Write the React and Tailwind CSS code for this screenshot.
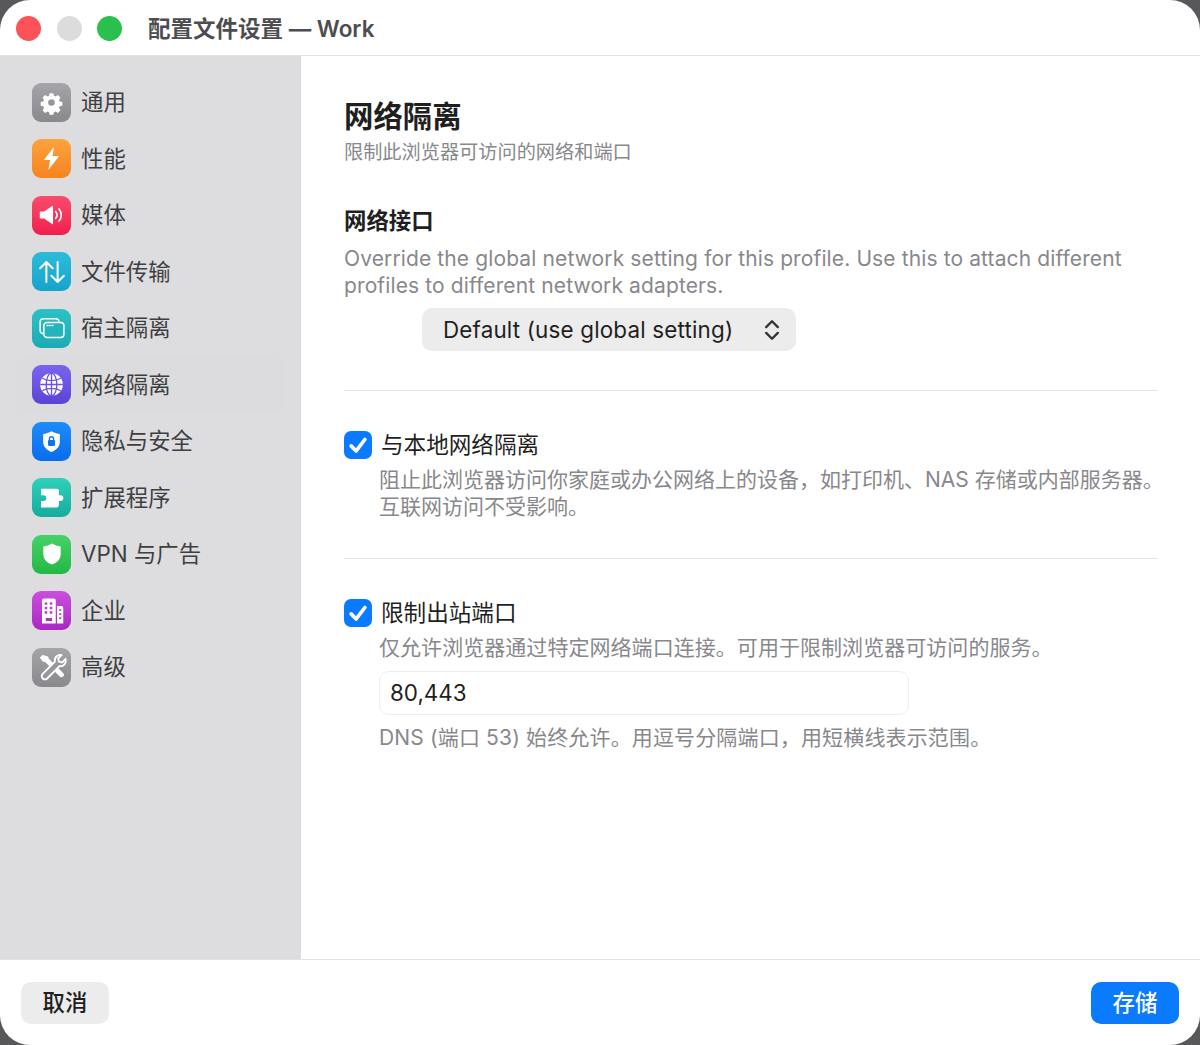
import React from 'react';

const cjk = "font-['Inter','Noto_Sans_CJK_SC',sans-serif]";

const GearIcon = () => (
    <svg viewBox="0 0 24 24" className="w-[25px] h-[25px]" fill="#fff">
        <path fillRule="evenodd" d="M10.2 3h3.6l.5 2.5 1.6.7 2.2-1.4 2.5 2.5-1.4 2.2.7 1.6 2.5.5v3.6l-2.5.5-.7 1.6 1.4 2.2-2.5 2.5-2.2-1.4-1.6.7-.5 2.5h-3.6l-.5-2.5-1.6-.7-2.2 1.4-2.5-2.5 1.4-2.2-.7-1.6-2.5-.5v-3.6l2.5-.5.7-1.6-1.4-2.2 2.5-2.5 2.2 1.4 1.6-.7zM12 8.8a3.2 3.2 0 1 0 0 6.4 3.2 3.2 0 0 0 0-6.4z" />
    </svg>
);

const BoltIcon = () => (
    <svg viewBox="0 0 24 24" className="w-[27px] h-[27px]" fill="#fff">
        <path d="M14.2 1.8 5.2 13.4h5.6l-1.6 8.8 9.6-12.4h-5.9z" />
    </svg>
);

const SpeakerIcon = () => (
    <svg viewBox="0 0 24 24" className="w-[28px] h-[28px]" fill="none">
        <path d="M2 9.5h3.6L12.4 4.6v14.8L5.6 14.5H2z" fill="#fff" stroke="#fff" strokeWidth="1" strokeLinejoin="round" />
        <path d="M15.2 9.2a4.4 4.4 0 0 1 0 5.6M18 6.8a8 8 0 0 1 0 10.4" stroke="#fff" strokeWidth="1.4" strokeLinecap="round" />
    </svg>
);

const TransferIcon = () => (
    <svg viewBox="0 0 24 24" className="w-[30px] h-[30px]" fill="none" stroke="#fff" strokeWidth="1.6" strokeLinecap="round" strokeLinejoin="round">
        <path d="M7.5 20V4M2.5 9l5-5 5 5M16.5 4v16M11.5 15l5 5 5-5" />
    </svg>
);

const WindowsIcon = () => (
    <svg viewBox="0 0 24 24" className="w-[30px] h-[30px]" fill="none" stroke="#fff" strokeWidth="1.2">
        <path d="M5 16.5A2.5 2.5 0 0 1 2.5 14V7A2.5 2.5 0 0 1 5 4.5h10A2.5 2.5 0 0 1 17.5 7" />
        <rect x="5.5" y="7.5" width="16" height="12" rx="2.5" fill="#22b5bd" />
        <path d="M8 10h.8M10 10h.8M12 10h.8" strokeLinecap="round" />
    </svg>
);

const GlobeIcon = () => (
    <svg viewBox="0 0 24 24" className="w-[29px] h-[29px]" fill="none" stroke="#6a55e0" strokeWidth="1.1">
        <circle cx="12" cy="12" r="9.4" fill="#fff" stroke="none" />
        <ellipse cx="12" cy="12" rx="4.4" ry="9.4" />
        <path d="M12 2.6v18.8M4.4 6.8c4 2.6 11.2 2.6 15.2 0M2.6 12h18.8M4.4 17.2c4-2.6 11.2-2.6 15.2 0" />
    </svg>
);

const LockShieldIcon = () => (
    <svg viewBox="0 0 24 24" className="w-[25px] h-[25px]">
        <path d="M12 2.2c2.4 1.5 5.2 2.3 8 2.6v7.4c0 4.8-3.4 8-8 9.8-4.6-1.8-8-5-8-9.8V4.8c2.8-.3 5.6-1.1 8-2.6z" fill="#fff" />
        <rect x="8.6" y="10.6" width="6.8" height="5.6" rx="1.1" fill="#1271ee" />
        <path d="M10 10.8V9.4a2 2 0 0 1 4 0v1.4" fill="none" stroke="#1271ee" strokeWidth="1.3" />
    </svg>
);

const PuzzleIcon = () => (
    <svg viewBox="0 0 24 24" className="w-[30px] h-[30px]" fill="#fff">
        <path d="M3.2 4.5h12.6a1.7 1.7 0 0 1 1.7 1.7v3.5h1.3a2.3 2.3 0 0 1 0 4.6h-1.3v3.5a1.7 1.7 0 0 1-1.7 1.7H3.2v-5.2h2a2.3 2.3 0 0 0 0-4.6h-2z" />
    </svg>
);

const ShieldIcon = () => (
    <svg viewBox="0 0 24 24" className="w-[26px] h-[26px]" fill="#fff">
        <path d="M12 2.4c2.4 1.5 5.2 2.3 8 2.6v7.2c0 4.7-3.3 7.8-8 9.6-4.7-1.8-8-4.9-8-9.6V5c2.8-.3 5.6-1.1 8-2.6z" />
    </svg>
);

const BuildingIcon = () => (
    <svg viewBox="0 0 24 24" className="w-[30px] h-[30px]">
        <path fillRule="evenodd" fill="#fff" d="M4 3.5A1.5 1.5 0 0 1 5.5 2h8A1.5 1.5 0 0 1 15 3.5V22H4zM6.2 5v2h2V5zm4 0v2h2V5zm-4 3.6v2h2v-2zm4 0v2h2v-2zm-4 3.6v2h2v-2zm4 0v2h2v-2zM7 17.5V20h5v-2.5zM16 8h3.5A1.5 1.5 0 0 1 21 9.5V22h-5zm1.8 2.5v1.4h1.6v-1.4zm0 3.2v1.4h1.6v-1.4zm0 3.2v1.4h1.6v-1.4z" />
    </svg>
);

const ToolsIcon = () => (
    <svg viewBox="0 0 24 24" className="w-[32px] h-[32px]" fill="none" stroke="#fff" strokeLinecap="round" strokeLinejoin="round">
        <path d="M5 3.4 3.4 5l2 2.6 1.8.3 11.2 11.3a1.5 1.5 0 0 0 2-2L9.2 6l-.4-1.5z" fill="#fff" strokeWidth="0.8" />
        <path d="M14.2 8 5 17.2a2.4 2.4 0 1 0 3.4 3.4l9.2-9.2a4.2 4.2 0 0 0 4.6-5.4l-2.6 2.6-2.4-.6-.6-2.4 2.6-2.6A4.2 4.2 0 0 0 14.2 8z" fill="#97979c" strokeWidth="1.4" />
    </svg>
);

const navItems = [
    { label: '通用', icon: GearIcon, bg: 'from-[#a4a4a9] to-[#88888d]' },
    { label: '性能', icon: BoltIcon, bg: 'from-[#ffa23c] to-[#f5841f]' },
    { label: '媒体', icon: SpeakerIcon, bg: 'from-[#fb4a6c] to-[#f01c4c]' },
    { label: '文件传输', icon: TransferIcon, bg: 'from-[#2cbcd8] to-[#16a3cc]' },
    { label: '宿主隔离', icon: WindowsIcon, bg: 'from-[#2cc1c4] to-[#1babb4]' },
    { label: '网络隔离', icon: GlobeIcon, bg: 'from-[#7a64ee] to-[#5b43d6]', active: true },
    { label: '隐私与安全', icon: LockShieldIcon, bg: 'from-[#1f8cfa] to-[#0a6cec]' },
    { label: '扩展程序', icon: PuzzleIcon, bg: 'from-[#2fd0ba] to-[#14ad9c]' },
    { label: 'VPN 与广告', icon: ShieldIcon, bg: 'from-[#45d167] to-[#22b845]' },
    { label: '企业', icon: BuildingIcon, bg: 'from-[#cb4fdc] to-[#a926c4]' },
    { label: '高级', icon: ToolsIcon, bg: 'from-[#a4a4a9] to-[#88888d]' },
];

const Checkbox = () => (
    <div className="w-[28px] h-[28px] rounded-[7px] bg-[#0a7aff] flex items-center justify-center shrink-0">
        <svg viewBox="0 0 24 24" className="w-[22px] h-[22px]" fill="none" stroke="#fff" strokeWidth="4" strokeLinecap="round" strokeLinejoin="round">
            <path d="M4.5 13 10 18.5 19.5 6" />
        </svg>
    </div>
);

const App = () => {
    return (
        <div className={`w-[1200px] h-[1045px] bg-[#58585a] overflow-hidden ${cjk}`}>
            <div className="h-full bg-white rounded-[30px] overflow-hidden flex flex-col">
                {/* Title bar */}
                <div className="h-[56px] shrink-0 flex items-center pl-[16px] pt-[2px] border-b border-[#e2e2e2]">
                    <div className="flex items-center gap-[15.5px]">
                        <div className="w-[25px] h-[25px] rounded-full bg-[#fd5257]" />
                        <div className="w-[25px] h-[25px] rounded-full bg-[#dcdcdc]" />
                        <div className="w-[25px] h-[25px] rounded-full bg-[#29c04e]" />
                    </div>
                    <div className="ml-[26px] text-[22.5px] font-semibold text-[#4d4d4f]">配置文件设置 — Work</div>
                </div>

                <div className="flex-1 flex min-h-0">
                    {/* Sidebar */}
                    <div className="w-[301px] shrink-0 bg-[#dddde0] pt-[18px] pl-[16px] pr-[17px]">
                        {navItems.map((item, index) => {
                            const Icon = item.icon;
                            return (
                                <div
                                    key={index}
                                    className={`h-[56.5px] flex items-center pl-[16px] rounded-[10px] ${item.active ? 'bg-[#dcdcde]' : ''}`}
                                >
                                    <div className={`w-[39px] h-[39px] rounded-[9px] bg-linear-to-b ${item.bg} flex items-center justify-center shrink-0`}>
                                        <Icon />
                                    </div>
                                    <span className="ml-[10px] text-[22.4px] text-[#3f3f42]">{item.label}</span>
                                </div>
                            );
                        })}
                    </div>

                    {/* Content */}
                    <div className="flex-1 min-w-0 pl-[43px] pr-[43px] pt-[41px]">
                        <h1 className="text-[29.4px] leading-[40px] font-bold text-[#1f1f1f]">网络隔离</h1>
                        <p className="text-[19.2px] leading-[28px] text-[#88888c] mt-[1px]">限制此浏览器可访问的网络和端口</p>

                        <h2 className="text-[22.4px] leading-[30px] font-bold text-[#1f1f1f] mt-[40px]">网络接口</h2>
                        <p className="text-[21px] tracking-[0.12px] leading-[27px] text-[#88888c] mt-[9px]">
                            Override the global network setting for this profile. Use this to attach different profiles to different network adapters.
                        </p>
                        <div className="ml-[78px] mt-[9px] w-[374px] h-[43px] bg-[#ececec] rounded-[10px] flex items-center justify-between pl-[21px] pr-[14px]">
                            <span className="text-[22.4px] tracking-[0.18px] text-[#1f1f1f]">Default (use global setting)</span>
                            <svg viewBox="0 0 16 24" className="w-[20px] h-[28px]" fill="none" stroke="#333" strokeWidth="2" strokeLinecap="round" strokeLinejoin="round">
                                <path d="M3 9.5 8 4.5l5 5M3 14.5l5 5 5-5" />
                            </svg>
                        </div>

                        <div className="h-px bg-[#e2e2e2] mt-[39px]" />

                        <div className="flex items-center gap-[9px] mt-[37px]">
                            <Checkbox />
                            <span className="text-[22.6px] text-[#1f1f1f]">与本地网络隔离</span>
                        </div>
                        <p className="ml-[35px] text-[21px] leading-[27px] text-[#88888c] mt-[4px] whitespace-nowrap">
                            阻止此浏览器访问你家庭或办公网络上的设备，如打印机、NAS 存储或内部服务器。
                            <br />
                            互联网访问不受影响。
                        </p>

                        <div className="h-px bg-[#e2e2e2] mt-[38px]" />

                        <div className="flex items-center gap-[9px] mt-[37px]">
                            <Checkbox />
                            <span className="text-[22.6px] text-[#1f1f1f]">限制出站端口</span>
                        </div>
                        <p className="ml-[35px] text-[21px] tracking-[0.05px] leading-[27px] text-[#88888c] mt-[4px]">
                            仅允许浏览器通过特定网络端口连接。可用于限制浏览器可访问的服务。
                        </p>
                        <div className="ml-[35px] mt-[10px] w-[530px] h-[44px] rounded-[10px] border border-[#eeeeee] flex items-center pl-[10px]">
                            <span className="text-[22.4px] text-[#1f1f1f]">80,443</span>
                        </div>
                        <p className="ml-[35px] text-[21px] tracking-[0.15px] leading-[27px] text-[#88888c] mt-[9px]">
                            DNS (端口 53) 始终允许。用逗号分隔端口，用短横线表示范围。
                        </p>
                    </div>
                </div>

                {/* Footer */}
                <div className="h-[86px] shrink-0 border-t border-[#e2e2e2] flex items-center justify-between px-[21px]">
                    <button className="w-[88px] h-[42px] rounded-[10px] bg-[#ececec] text-[22.4px] text-[#1f1f1f] font-medium">取消</button>
                    <button className="w-[88px] h-[42px] rounded-[10px] bg-[#0a7aff] text-[22.4px] text-white font-medium">存储</button>
                </div>
            </div>
        </div>
    );
};

export default App;
